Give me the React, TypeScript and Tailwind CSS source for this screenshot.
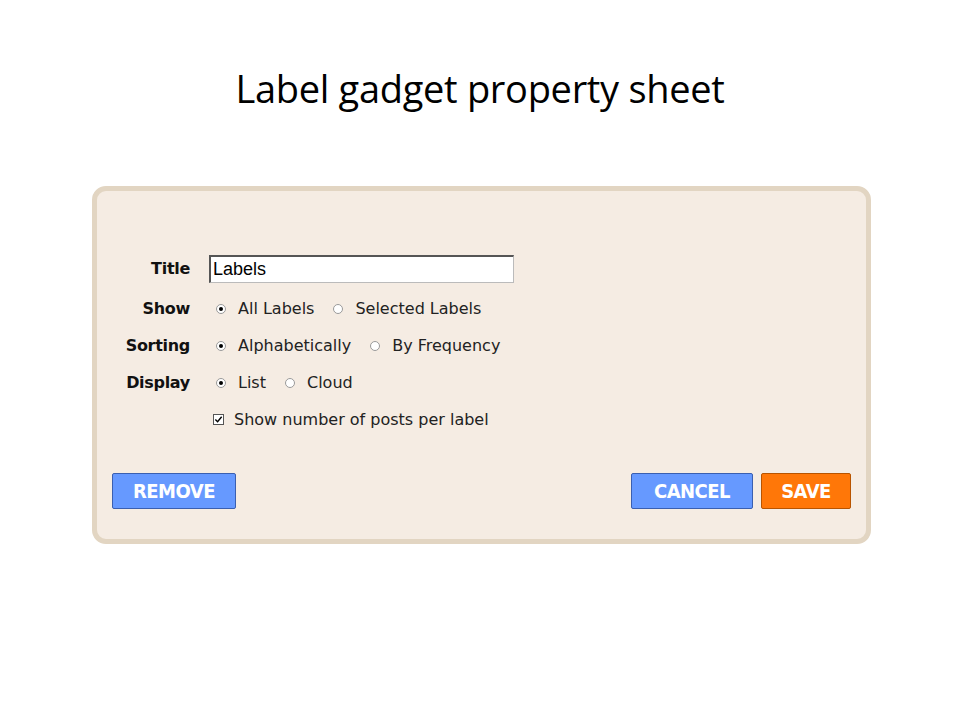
import { useState } from 'react';

function Radio({ checked }: { checked?: boolean }) {
  return (
    <span className="inline-flex w-[10px] h-[10px] rounded-full border border-[#9a9a9a] bg-white items-center justify-center">
      {checked && <span className="w-[4px] h-[4px] rounded-full bg-black" />}
    </span>
  );
}

function Option({ label, checked }: { label: string; checked?: boolean }) {
  return (
    <span className="inline-flex items-center gap-[12px]">
      <Radio checked={checked} />
      <span>{label}</span>
    </span>
  );
}

const rows = [
  { name: 'Show', opts: [['All Labels', true], ['Selected Labels', false]] },
  { name: 'Sorting', opts: [['Alphabetically', true], ['By Frequency', false]] },
  { name: 'Display', opts: [['List', true], ['Cloud', false]] },
] as const;

export default function App() {
  const [title, setTitle] = useState('Labels');

  return (
    <div className="w-[960px] h-[720px] bg-white relative">
      {/* Slide heading */}
      <h1 className="pt-[64px] text-center text-[38px] leading-[48px] text-black font-['Open_Sans',sans-serif] tracking-[-0.3px]">
        Label gadget property sheet
      </h1>

      {/* Property sheet */}
      <div className="mt-[74px] ml-[92px] w-[779px] h-[358px] rounded-[14px] border-[5px] border-[#e2d5c2] bg-[#f5ece3] font-['DejaVu_Sans',sans-serif] text-[#222] text-[16px]">
        <div className="pt-[64px] grid grid-cols-[93px_1fr] gap-x-[19px] gap-y-[14px] items-center">
          <span className="text-right font-bold text-[16px] text-[#111] tracking-[-0.3px]">Title</span>
          <input
            value={title}
            onChange={e => setTitle(e.target.value)}
            className="w-[305px] h-[28px] bg-white border border-[#bbb] border-t-[#555] border-l-[#555] border-t-2 border-l-2 px-[2px] text-[18px] font-['Liberation_Sans',sans-serif] text-black outline-none"
          />
          {rows.map(r => (
            <div key={r.name} className="contents">
              <span className="text-right font-bold text-[16px] text-[#111] tracking-[-0.3px] leading-[23px]">{r.name}</span>
              <div className="flex items-center gap-[19px] pl-[7px] leading-[23px]">
                {r.opts.map(([l, c]) => (
                  <Option key={l} label={l} checked={c} />
                ))}
              </div>
            </div>
          ))}
          <span />
          <div className="flex items-center gap-[10px] pl-[4px] leading-[23px]">
            <span className="w-[11px] h-[11px] border border-[#555] bg-white flex items-center justify-center">
              <svg viewBox="0 0 10 10" className="w-[9px] h-[9px]">
                <path d="M1.5 5 L4 7.5 L8.5 2" fill="none" stroke="#000" strokeWidth="1.6" />
              </svg>
            </span>
            <span>Show number of posts per label</span>
          </div>
        </div>

        <div className="mt-[42px] flex items-center px-[15px] font-['DejaVu_Sans_Condensed','DejaVu_Sans',sans-serif] font-bold text-white text-[20px] tracking-[-0.5px]">
          <button className="w-[124px] h-[36px] bg-[#6699ff] border border-[#3a5fb0] rounded-[2px]">REMOVE</button>
          <div className="flex-1" />
          <button className="w-[122px] h-[36px] bg-[#6699ff] border border-[#3a5fb0] rounded-[2px]">CANCEL</button>
          <button className="ml-[8px] w-[90px] h-[36px] bg-[#ff7708] border border-[#b85400] rounded-[2px]">SAVE</button>
        </div>
      </div>
    </div>
  );
}
